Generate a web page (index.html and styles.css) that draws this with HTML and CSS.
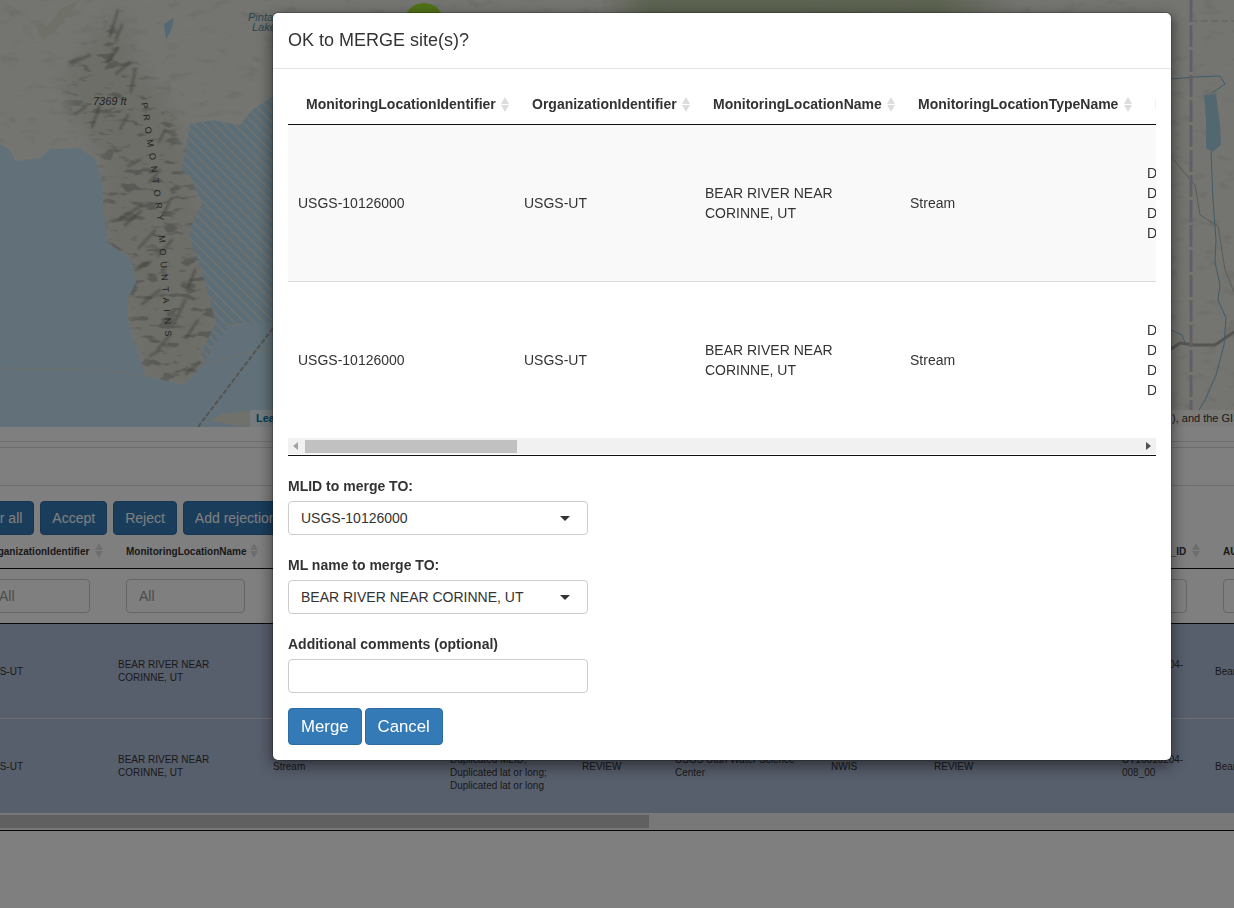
FILE: index.html
```html
<!DOCTYPE html>
<html lang="en">
<head>
  <meta charset="UTF-8" />
  <title>Merge sites</title>
  <link rel="stylesheet" href="styles.css">
</head>
<body>
  <div class="map">
    <svg class="map-art" width="1234" height="427" viewBox="0 0 1234 427">
      <defs>
        <filter id="relief" x="0" y="0" width="1" height="1">
          <feTurbulence type="fractalNoise" baseFrequency="0.05 0.13" numOctaves="3" seed="7" />
          <feColorMatrix values="0 0 0 0 .4  0 0 0 0 .4  0 0 0 0 .36  8 0 0 0 -4.5" />
        </filter>
        <filter id="grain" x="0" y="0" width="1" height="1">
          <feTurbulence type="fractalNoise" baseFrequency="0.05 0.11" numOctaves="3" seed="3" />
          <feColorMatrix values="0 0 0 0 .55  0 0 0 0 .55  0 0 0 0 .52  5 0 0 0 -2.85" />
        </filter>
        <filter id="soft" x="-5%" y="-5%" width="110%" height="110%">
          <feGaussianBlur stdDeviation="0.8" />
        </filter>
        <filter id="fade" x="-20%" y="-20%" width="140%" height="140%">
          <feGaussianBlur stdDeviation="9" />
        </filter>
        <linearGradient id="olive">
          <stop offset="0" stop-color="#b9c6a0" stop-opacity="0" />
          <stop offset=".12" stop-color="#b9c6a0" />
          <stop offset=".8" stop-color="#b9c6a0" />
          <stop offset="1" stop-color="#b9c6a0" stop-opacity="0" />
        </linearGradient>
        <pattern id="hatch" width="7" height="7" patternUnits="userSpaceOnUse" patternTransform="rotate(-45)">
          <rect width="7" height="7" fill="#b6dbef" />
          <rect width="1.6" height="7" fill="#e4e4d8" />
        </pattern>
        <mask id="range" maskUnits="userSpaceOnUse" x="0" y="0" width="273" height="427">
          <path fill="#fff" filter="url(#fade)" d="M118 0 L135 60 L180 120 L195 180 L215 262 L225 322 L195 390 L145 385 L120 300 L95 212 L105 170 L72 112 L62 78 L105 25 Z" />
        </mask>
      </defs>

      <rect width="1234" height="427" fill="#e9e9e2" />
      <rect x="600" width="420" height="14" fill="url(#olive)" />
      <rect width="1234" height="427" filter="url(#grain)" opacity="0.3" />

      <path d="M33 20 L42 40 L55 32 L80 0 L62 8 L48 26 Z" fill="#dfe1d0" />
      <path d="M164 24 L174 18 L172 28 L166 40 Z" fill="#a9d3ea" />

      <g mask="url(#range)">
        <rect width="273" height="427" fill="#dcdcd2" />
        <rect width="273" height="427" filter="url(#relief)" opacity="0.8" />
      </g>
      <path class="ridges" filter="url(#soft)" d="M130 62 l-14 12 M118 48 l-10 14 M90 55 l-18 8 M122 25 l-6 14 M135 70 l-4 22 M85 108 l-10 6 M100 105 l-8 22 M128 115 l-8 14 M165 130 l-6 12 M140 160 l-12 6 M160 170 l-10 12 M142 205 l-22 14 M125 225 l16 -14 M170 200 l-6 14 M155 230 l-16 18 M150 262 l-14 8 M172 240 l-14 16 M195 270 l-8 20 M160 290 l-18 14 M185 300 l-10 22 M170 335 l-12 14 M198 320 l-12 18 M200 362 l-14 12 M160 350 l-10 6 M118 10 l-8 26 M80 58 l-10 4" />

      <path class="sea" d="M0 144 L10 150 L15 161 L40 158 L50 149 L80 148 L96 160 L103 185 L103 205 L108 243 L130 258 L136 282 L128 298 L128 322 L140 358 L146 376 L184 385 L205 362 L225 328 L273 318 L273 427 L0 427 Z" />
      <path d="M190 124 L212 120 L240 125 L252 110 L273 96 L273 322 L232 324 L210 350 L204 364 L203 350 L216 322 L200 266 L189 238 L190 228 L202 204 L190 176 L182 170 Z" fill="url(#hatch)" />
      <path d="M0 368 L100 370 L146 376" class="shore" />
      <path d="M205 364 L250 352 L273 348" class="shore" />
      <path d="M210 420 L222 414 L250 411 L250 427 L232 425 Z" fill="#e3e2d8" />
      <path d="M198 427 L273 328" class="rail" />

      <path class="river" d="M1171 79 L1195 77 L1220 76 L1225 84 L1212 93" />
      <path class="road-thin" d="M1171 157 L1195 185 L1200 215 L1218 226 L1225 270 L1234 292" />
      <path class="river" d="M1211 152 L1213 200 L1216 240 L1215 262 L1220 285 L1218 300 L1226 318 L1224 345 L1216 375 L1205 400 L1198 412" />
      <path class="river" d="M1171 330 L1182 335 L1186 345" />
      <path d="M1204 95 L1216 94 L1220 125 L1221 145 L1212 152 L1206 148 L1206 120 Z" fill="#a6cfe3" />
      <path class="road" d="M1171 349 L1180 343 L1195 345 L1215 345 L1234 332" />
      <path class="border-line" d="M1191 0 L1191 410" />
      <path class="border-thin" d="M1191 21 L1234 21" />

      <circle cx="424" cy="23" r="20" fill="#a2e32e" />

      <text class="peak" x="93" y="105">7369 ft</text>
      <text class="water" x="248" y="21">Pintail</text>
      <text class="water" x="252" y="31">Lake</text>
      <path id="rangeLine" d="M141 103 L150 160 L158 225 L166 345" fill="none" />
      <text class="range-name"><textPath href="#rangeLine">PROMONTORY MOUNTAINS</textPath></text>
    </svg>
    <div class="attribution">
      <span class="attr-lead"><a href="#">Leaflet</a> | Tiles &copy; Esri</span>
      <span>), and the GIS User Community</span>
    </div>
  </div>

  <div class="rule rule-a"></div>
  <div class="rule rule-b"></div>
  <div class="rule rule-c"></div>

  <div class="toolbar">
    <button class="btn">Clear all</button>
    <button class="btn">Accept</button>
    <button class="btn">Reject</button>
    <button class="btn">Add rejection reason</button>
  </div>

  <div class="sites-wrap">
    <table class="sites">
      <colgroup>
        <col class="w140"><col class="w155"><col class="w177"><col class="w132"><col class="w93">
        <col class="w156"><col class="w103"><col class="w188"><col class="w93"><col class="w150">
      </colgroup>
      <thead>
        <tr>
          <th class="sort">OrganizationIdentifier</th>
          <th class="sort">MonitoringLocationName</th>
          <th class="sort">MonitoringLocationTypeName</th>
          <th class="sort">Flags</th>
          <th class="sort">Status</th>
          <th class="sort">ProviderName</th>
          <th class="sort">Source</th>
          <th class="sort">ReviewStatus</th>
          <th class="sort">ASSESS_ID</th>
          <th class="sort">AU_NAME</th>
        </tr>
        <tr class="filters">
          <th><input placeholder="All"></th>
          <th><input placeholder="All"></th>
          <th><input placeholder="All"></th>
          <th><input placeholder="All"></th>
          <th><input placeholder="All"></th>
          <th><input placeholder="All"></th>
          <th><input placeholder="All"></th>
          <th><input placeholder="All"></th>
          <th><input placeholder="All"></th>
          <th><input placeholder="All"></th>
        </tr>
      </thead>
      <tbody>
        <tr>
          <td>USGS-UT</td>
          <td>BEAR RIVER NEAR CORINNE, UT</td>
          <td>Stream</td>
          <td>Duplicated MLID;<br>Duplicated MLID;<br>Duplicated lat or long;<br>Duplicated lat or long</td>
          <td>REVIEW</td>
          <td>USGS Utah Water Science Center</td>
          <td>NWIS</td>
          <td>REVIEW</td>
          <td>UT10010204-<br>008_00</td>
          <td>Bear River</td>
        </tr>
        <tr>
          <td>USGS-UT</td>
          <td>BEAR RIVER NEAR CORINNE, UT</td>
          <td>Stream</td>
          <td>Duplicated MLID;<br>Duplicated MLID;<br>Duplicated lat or long;<br>Duplicated lat or long</td>
          <td>REVIEW</td>
          <td>USGS Utah Water Science Center</td>
          <td>NWIS</td>
          <td>REVIEW</td>
          <td>UT10010204-<br>008_00</td>
          <td>Bear River</td>
        </tr>
      </tbody>
    </table>
  </div>
  <div class="page-scroll"><div class="page-thumb"></div></div>

  <div class="backdrop"></div>

  <div class="modal">
    <h4 class="modal-title">OK to MERGE site(s)?</h4>
    <div class="modal-body">
      <div class="merge-wrap">
        <table class="merge">
          <colgroup>
            <col class="w226"><col class="w181"><col class="w205"><col class="w237"><col class="w300">
          </colgroup>
          <thead>
            <tr>
              <th class="sort">MonitoringLocationIdentifier</th>
              <th class="sort">OrganizationIdentifier</th>
              <th class="sort">MonitoringLocationName</th>
              <th class="sort">MonitoringLocationTypeName</th>
              <th class="sort">Flags</th>
            </tr>
          </thead>
          <tbody>
            <tr>
              <td>USGS-10126000</td>
              <td>USGS-UT</td>
              <td>BEAR RIVER NEAR CORINNE, UT</td>
              <td>Stream</td>
              <td>Duplicated MLID;<br>Duplicated MLID;<br>Duplicated lat or long;<br>Duplicated lat or long</td>
            </tr>
            <tr>
              <td>USGS-10126000</td>
              <td>USGS-UT</td>
              <td>BEAR RIVER NEAR CORINNE, UT</td>
              <td>Stream</td>
              <td>Duplicated MLID;<br>Duplicated MLID;<br>Duplicated lat or long;<br>Duplicated lat or long</td>
            </tr>
          </tbody>
        </table>
      </div>
      <div class="merge-scroll">
        <span class="arrow-left"></span>
        <span class="merge-thumb"></span>
        <span class="arrow-right"></span>
      </div>

      <div class="field">
        <label>MLID to merge TO:</label>
        <div class="pick">USGS-10126000</div>
      </div>
      <div class="field">
        <label>ML name to merge TO:</label>
        <div class="pick">BEAR RIVER NEAR CORINNE, UT</div>
      </div>
      <div class="field field-last">
        <label for="comments">Additional comments (optional)</label>
        <input id="comments" class="text-input" type="text">
      </div>
      <div class="actions">
        <button class="btn btn-big">Merge</button>
        <button class="btn btn-big">Cancel</button>
      </div>
    </div>
  </div>
</body>
</html>
```

FILE: styles.css
```css
/* Reset and base styles */
* {
  box-sizing: border-box;
}
html, body {
  margin: 0;
  height: 908px;
  overflow: hidden;
}
body {
  font-family: "Liberation Sans", Arial, sans-serif;
  font-size: 14px;
  line-height: 20px;
  color: #333;
  background: #fff;
}

/* Map */
.map {
  position: relative;
  height: 427px;
  overflow: hidden;
}
.map-art {
  display: block;
}
.sea { fill: #c4e2f2; }
.shore { fill: none; stroke: #dcdcd0; stroke-width: 1; }
.rail { fill: none; stroke: #a8a8a0; stroke-width: 2; stroke-dasharray: 5 2; }
.ridges { fill: none; stroke: #77776d; stroke-width: 2.5; stroke-linecap: round; opacity: .5; }
.river { fill: none; stroke: #7db9d2; stroke-width: 1; }
.road { fill: none; stroke: #a8a8a4; stroke-width: 3; }
.road-thin { fill: none; stroke: #b4b4ac; stroke-width: 1; }
.border-line { fill: none; stroke: #c4bcc6; stroke-width: 3; stroke-dasharray: 22 3; }
.border-thin { fill: none; stroke: #c4bec4; stroke-width: 1; stroke-dasharray: 7 3; }
.peak { font: italic 11px "Liberation Sans", Arial, sans-serif; fill: #444; }
.water { font: italic 11px "Liberation Sans", Arial, sans-serif; fill: #4f8fa8; }
.range-name { font: 9px "Liberation Sans", Arial, sans-serif; letter-spacing: 6px; fill: #444; }

.attribution {
  position: absolute;
  left: 250px;
  right: 0;
  bottom: 0;
  display: flex;
  height: 17px;
  font-size: 11px;
  line-height: 17px;
  white-space: nowrap;
  background: rgba(255, 255, 255, 0.7);
}
.attr-lead {
  flex: none;
  width: 922px;
  padding-left: 6px;
}
.attribution a {
  color: #0078a8;
  font-weight: bold;
  text-decoration: none;
}

/* Rules between the map and the table */
.rule {
  border-bottom: 1px solid #ddd;
}
.rule-a { height: 15px; }
.rule-b { height: 6px; }
.rule-c { height: 38px; }

/* Buttons */
.toolbar {
  display: flex;
  gap: 6px;
  margin-left: -41px;
  padding: 15px 0 5px;
  white-space: nowrap;
}
.btn {
  flex: none;
  height: 34px;
  padding: 6px 11px;
  font: 14px/20px "Liberation Sans", Arial, sans-serif;
  color: #fff;
  background: #337ab7;
  border: 1px solid #2e6da4;
  border-radius: 4px;
}
.btn-big {
  height: 37px;
  padding: 6px 12px;
  font-size: 16.8px;
}

/* Column widths */
.w93 { width: 93px; }
.w103 { width: 103px; }
.w132 { width: 132px; }
.w140 { width: 140px; }
.w150 { width: 150px; }
.w155 { width: 155px; }
.w156 { width: 156px; }
.w177 { width: 177px; }
.w181 { width: 181px; }
.w188 { width: 188px; }
.w205 { width: 205px; }
.w226 { width: 226px; }
.w237 { width: 237px; }
.w300 { width: 300px; }

/* Sort arrows */
th.sort {
  position: relative;
  white-space: nowrap;
  overflow: hidden;
}
th.sort::before,
th.sort::after {
  content: "";
  position: absolute;
  right: 5px;
  border-left: 4.5px solid transparent;
  border-right: 4.5px solid transparent;
}
th.sort::before {
  top: 13px;
  border-bottom: 7px solid #ddd;
}
th.sort::after {
  top: 21px;
  border-top: 7px solid #ddd;
}

/* Table behind the dialog */
.sites-wrap {
  overflow: hidden;
}
.sites {
  table-layout: fixed;
  width: 1387px;
  margin-left: -32px;
  border-collapse: separate;
  border-spacing: 0;
  font-size: 10px;
  line-height: 13px;
}
.sites th {
  height: 29px;
  padding: 0 18px 6px;
  text-align: left;
  color: #333;
  border-bottom: 1px solid #111;
}
.sites th.sort::before { top: 3px; }
.sites th.sort::after { top: 11px; }
.sites .filters th {
  height: 55px;
  padding-bottom: 0;
}
.filters input {
  display: block;
  width: 100%;
  height: 34px;
  padding: 6px 12px;
  font: 14px/20px "Liberation Sans", Arial, sans-serif;
  background: #fff;
  border: 1px solid #ccc;
  border-radius: 4px;
}
.filters input::placeholder {
  color: #999;
}
.sites td {
  height: 94px;
  padding: 0 10px;
  background: #b0bed9;
}
.sites tr + tr td {
  height: 95px;
  border-top: 1px solid #ddd;
}
.page-scroll {
  height: 18px;
  padding-top: 2px;
  background: #f1f1f1;
  border-bottom: 1px solid #111;
}
.page-thumb {
  width: 649px;
  height: 13px;
  background: #c1c1c1;
}

/* Dialog */
.backdrop {
  position: fixed;
  inset: 0;
  background: #000;
  opacity: .5;
}
.modal {
  position: fixed;
  top: 12px;
  left: 272px;
  width: 900px;
  height: 749px;
  background: #fff;
  background-clip: padding-box;
  border: 1px solid rgba(0, 0, 0, 0.2);
  border-radius: 6px;
  box-shadow: 0 5px 15px rgba(0, 0, 0, 0.5);
}
.modal-title {
  margin: 0;
  padding: 15px;
  font-size: 18px;
  font-weight: normal;
  line-height: 25px;
  border-bottom: 1px solid #e5e5e5;
}
.modal-body {
  padding: 15px;
}

.merge-wrap {
  overflow: hidden;
}
.merge {
  table-layout: fixed;
  width: 1149px;
  border-collapse: separate;
  border-spacing: 0;
}
.merge th {
  height: 41px;
  padding: 0 18px;
  text-align: left;
  border-bottom: 1px solid #111;
}
.merge td {
  height: 156px;
  padding: 0 10px;
}
.merge tbody tr:first-child td {
  background: #f9f9f9;
}
.merge tbody tr + tr td {
  height: 157px;
  border-top: 1px solid #ddd;
}

.merge-scroll {
  display: flex;
  align-items: center;
  height: 18px;
  padding: 0 4px 1px 5px;
  background: linear-gradient(#f1f1f1 16px, #fff 16px);
  border-bottom: 1px solid #111;
}
.merge-thumb {
  flex: none;
  width: 212px;
  height: 13px;
  margin-left: 7px;
  background: #c1c1c1;
}
.arrow-left {
  flex: none;
  border-top: 4px solid transparent;
  border-bottom: 4px solid transparent;
  border-right: 5px solid #a3a3a3;
}
.arrow-right {
  flex: none;
  margin-left: auto;
  margin-right: 1px;
  border-top: 4px solid transparent;
  border-bottom: 4px solid transparent;
  border-left: 5px solid #505050;
}

/* Form */
.field {
  margin-top: 20px;
}
.field label {
  display: block;
  margin-bottom: 5px;
  font-weight: bold;
}
.pick,
.text-input {
  display: block;
  width: 300px;
  height: 34px;
  padding: 6px 12px;
  font: 14px/20px "Liberation Sans", Arial, sans-serif;
  color: #333;
  background: #fff;
  border: 1px solid #ccc;
  border-radius: 4px;
}
.pick {
  position: relative;
}
.pick::after {
  content: "";
  position: absolute;
  top: 14px;
  right: 17px;
  border-left: 5px solid transparent;
  border-right: 5px solid transparent;
  border-top: 5px solid #333;
}
.field-last {
  margin-bottom: 15px;
}
.actions {
  display: flex;
  gap: 3px;
}
```
